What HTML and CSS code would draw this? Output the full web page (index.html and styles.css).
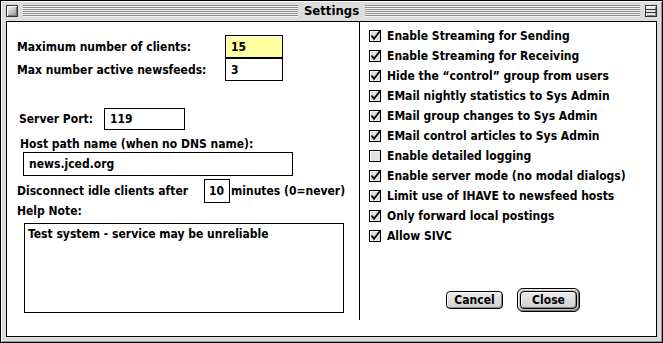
FILE: index.html
```html
<!DOCTYPE html>
<html>
<head>
<meta charset="utf-8">
<title>Settings</title>
<link rel="stylesheet" href="styles.css">
</head>
<body>
<div class="window">
  <div class="titlebar">
    <span class="closebox"></span>
    <span class="stripes"></span>
    <span class="title">Settings</span>
    <span class="stripes"></span>
    <span class="collapsebox"></span>
  </div>
  <div class="content">
    <div class="left">
      <div class="row r1"><span class="lbl l1">Maximum number of clients:</span><span class="field f-num active">15</span></div>
      <div class="row r2"><span class="lbl l1">Max number active newsfeeds:</span><span class="field f-num">3</span></div>
      <div class="row r3"><span class="lbl l3">Server Port:</span><span class="field f-port">119</span></div>
      <div class="text t-host">Host path name (when no DNS name):</div>
      <div class="field f-host">news.jced.org</div>
      <div class="row r5"><span class="lbl l5">Disconnect idle clients after</span><span class="field f-min">10</span><span class="after">minutes (0=never)</span></div>
      <div class="text t-help">Help Note:</div>
      <div class="field f-note">Test system - service may be unreliable</div>
    </div>
    <div class="divider"></div>
    <div class="right">
      <ul class="checks">
        <li><svg class="cb" width="12" height="12" viewBox="0 0 12 12"><rect x="0.5" y="0.5" width="11" height="11" fill="#e2e2e2" stroke="#000"/><path d="M1.5 1.5H10.5M1.5 1.5V10.5" stroke="#fff"/><path d="M2.5 5.5L5 8.8L10.8 1.2" fill="none" stroke="#000" stroke-width="1.8"/></svg><span>Enable Streaming for Sending</span></li>
        <li><svg class="cb" width="12" height="12" viewBox="0 0 12 12"><rect x="0.5" y="0.5" width="11" height="11" fill="#e2e2e2" stroke="#000"/><path d="M1.5 1.5H10.5M1.5 1.5V10.5" stroke="#fff"/><path d="M2.5 5.5L5 8.8L10.8 1.2" fill="none" stroke="#000" stroke-width="1.8"/></svg><span>Enable Streaming for Receiving</span></li>
        <li><svg class="cb" width="12" height="12" viewBox="0 0 12 12"><rect x="0.5" y="0.5" width="11" height="11" fill="#e2e2e2" stroke="#000"/><path d="M1.5 1.5H10.5M1.5 1.5V10.5" stroke="#fff"/><path d="M2.5 5.5L5 8.8L10.8 1.2" fill="none" stroke="#000" stroke-width="1.8"/></svg><span>Hide the “control” group from users</span></li>
        <li><svg class="cb" width="12" height="12" viewBox="0 0 12 12"><rect x="0.5" y="0.5" width="11" height="11" fill="#e2e2e2" stroke="#000"/><path d="M1.5 1.5H10.5M1.5 1.5V10.5" stroke="#fff"/><path d="M2.5 5.5L5 8.8L10.8 1.2" fill="none" stroke="#000" stroke-width="1.8"/></svg><span>EMail nightly statistics to Sys Admin</span></li>
        <li><svg class="cb" width="12" height="12" viewBox="0 0 12 12"><rect x="0.5" y="0.5" width="11" height="11" fill="#e2e2e2" stroke="#000"/><path d="M1.5 1.5H10.5M1.5 1.5V10.5" stroke="#fff"/><path d="M2.5 5.5L5 8.8L10.8 1.2" fill="none" stroke="#000" stroke-width="1.8"/></svg><span>EMail group changes to Sys Admin</span></li>
        <li><svg class="cb" width="12" height="12" viewBox="0 0 12 12"><rect x="0.5" y="0.5" width="11" height="11" fill="#e2e2e2" stroke="#000"/><path d="M1.5 1.5H10.5M1.5 1.5V10.5" stroke="#fff"/><path d="M2.5 5.5L5 8.8L10.8 1.2" fill="none" stroke="#000" stroke-width="1.8"/></svg><span>EMail control articles to Sys Admin</span></li>
        <li><svg class="cb" width="12" height="12" viewBox="0 0 12 12"><rect x="0.5" y="0.5" width="11" height="11" fill="#e2e2e2" stroke="#000"/><path d="M1.5 1.5H10.5M1.5 1.5V10.5" stroke="#fff"/></svg><span>Enable detailed logging</span></li>
        <li><svg class="cb" width="12" height="12" viewBox="0 0 12 12"><rect x="0.5" y="0.5" width="11" height="11" fill="#e2e2e2" stroke="#000"/><path d="M1.5 1.5H10.5M1.5 1.5V10.5" stroke="#fff"/><path d="M2.5 5.5L5 8.8L10.8 1.2" fill="none" stroke="#000" stroke-width="1.8"/></svg><span>Enable server mode (no modal dialogs)</span></li>
        <li><svg class="cb" width="12" height="12" viewBox="0 0 12 12"><rect x="0.5" y="0.5" width="11" height="11" fill="#e2e2e2" stroke="#000"/><path d="M1.5 1.5H10.5M1.5 1.5V10.5" stroke="#fff"/><path d="M2.5 5.5L5 8.8L10.8 1.2" fill="none" stroke="#000" stroke-width="1.8"/></svg><span>Limit use of IHAVE to newsfeed hosts</span></li>
        <li><svg class="cb" width="12" height="12" viewBox="0 0 12 12"><rect x="0.5" y="0.5" width="11" height="11" fill="#e2e2e2" stroke="#000"/><path d="M1.5 1.5H10.5M1.5 1.5V10.5" stroke="#fff"/><path d="M2.5 5.5L5 8.8L10.8 1.2" fill="none" stroke="#000" stroke-width="1.8"/></svg><span>Only forward local postings</span></li>
        <li><svg class="cb" width="12" height="12" viewBox="0 0 12 12"><rect x="0.5" y="0.5" width="11" height="11" fill="#e2e2e2" stroke="#000"/><path d="M1.5 1.5H10.5M1.5 1.5V10.5" stroke="#fff"/><path d="M2.5 5.5L5 8.8L10.8 1.2" fill="none" stroke="#000" stroke-width="1.8"/></svg><span>Allow SIVC</span></li>
      </ul>
      <div class="buttons">
        <button class="btn">Cancel</button>
        <span class="default-ring"><button class="btn">Close</button></span>
      </div>
    </div>
  </div>
</div>
</body>
</html>
```

FILE: styles.css
```css
html, body {
  margin: 0;
  padding: 0;
  background: #fff;
}

.window {
  box-sizing: border-box;
  width: 663px;
  height: 343px;
  border: 1px solid #000;
  background: #dcdcdc;
  box-shadow: inset 1px 1px 0 #fff, inset -1px -1px 0 #9a9a9a;
  padding: 0 5px 5px 5px;
  display: flex;
  flex-direction: column;
  font-family: "DejaVu Sans Condensed", "DejaVu Sans", sans-serif;
  font-weight: bold;
  font-size: 12px;
  color: #000;
}

/* ---- title bar ---- */
.titlebar {
  height: 20px;
  display: flex;
  align-items: flex-start;
}

.closebox {
  box-sizing: border-box;
  width: 12px;
  height: 12px;
  margin-top: 4px;
  border: 1px solid #333;
  background: linear-gradient(135deg, #f4f4f4 0%, #c8c8c8 50%, #8c8c8c 100%);
  box-shadow: inset 1px 1px 0 #fff, inset -1px -1px 0 #777;
}

.stripes {
  flex: 1;
  height: 12px;
  margin: 4px 5px 0 5px;
  background: repeating-linear-gradient(to bottom, #8c8c8c 0 1px, #f6f6f6 1px 2px);
}

.title {
  font-size: 13px;
  line-height: 20px;
  padding: 0 1px;
}

.collapsebox {
  position: relative;
  box-sizing: border-box;
  width: 12px;
  height: 12px;
  margin-top: 4px;
  border: 1px solid #333;
  background: #e4e4e4;
  box-shadow: inset 1px 1px 0 #fff, inset -1px -1px 0 #888;
}

.collapsebox::after {
  content: "";
  position: absolute;
  left: 0;
  right: 0;
  top: 3px;
  height: 2px;
  border-top: 1px solid #333;
  border-bottom: 1px solid #333;
}

/* ---- content ---- */
.content {
  flex: 1;
  border: 1px solid #000;
  background: #fff;
  display: grid;
  grid-template-columns: 352px 1px 1fr;
  align-items: start;
}

.divider {
  height: 298px;
  background: #000;
}

.left {
  display: flex;
  flex-direction: column;
  align-items: flex-start;
  padding-left: 10px;
}

.row {
  display: flex;
  align-items: center;
}

.lbl {
  box-sizing: border-box;
  white-space: nowrap;
}

.field {
  box-sizing: border-box;
  border: 1px solid #000;
  background: #fff;
  padding-left: 5px;
  white-space: nowrap;
  display: flex;
  align-items: center;
}

.field.active {
  background: #ffffa0;
  box-shadow: inset 1px 1px 0 #fff;
}

.r1 { margin-top: 13px; }
.r2 { margin-top: 0; }
.l1 { width: 208px; }

.f-num {
  width: 58px;
  height: 23px;
}

.r3 { margin-top: 27px; margin-left: 2px; }
.l3 { width: 85px; }
.f-port {
  width: 81px;
  height: 22px;
}

.text {
  line-height: 16px;
  white-space: nowrap;
}

.t-host { margin-top: 6px; margin-left: 3px; }

.f-host {
  margin-left: 6px;
  width: 270px;
  height: 24px;
}

.r5 { margin-top: 3px; }
.l5 { width: 187px; }
.f-min {
  width: 26px;
  height: 24px;
  padding-left: 4px;
}
.after { margin-left: 1px; white-space: nowrap; }

.t-help { margin-top: 0; }

.f-note {
  margin-top: 4px;
  margin-left: 7px;
  width: 320px;
  height: 90px;
  align-items: flex-start;
  padding: 2px 3px;
  line-height: 16px;
}

/* ---- right column ---- */
.right {
  padding-left: 9px;
  padding-top: 8px;
}

.checks {
  list-style: none;
  margin: 0;
  padding: 0;
}

.checks li {
  height: 20px;
  display: flex;
  align-items: flex-start;
  white-space: nowrap;
}

.cb {
  flex: none;
  display: block;
}

.checks li span {
  margin-left: 6px;
  line-height: 12px;
}

.buttons {
  margin-top: 38px;
  padding-left: 77px;
  display: flex;
  align-items: center;
  gap: 14px;
}

.btn {
  box-sizing: border-box;
  width: 57px;
  height: 18px;
  padding: 0;
  border: 1px solid #000;
  border-radius: 4px;
  background: linear-gradient(#ececec, #cfcfcf);
  box-shadow: inset 1px 1px 0 #fff, inset -1px -1px 0 #8a8a8a;
  font: inherit;
  color: #000;
  line-height: 14px;
}

.default-ring {
  box-sizing: border-box;
  display: flex;
  padding: 2px;
  border: 1px solid #000;
  border-radius: 6px;
  background: #c4c4c4;
  box-shadow: inset 1px 1px 0 #eee, inset -1px -1px 0 #777;
}
```
